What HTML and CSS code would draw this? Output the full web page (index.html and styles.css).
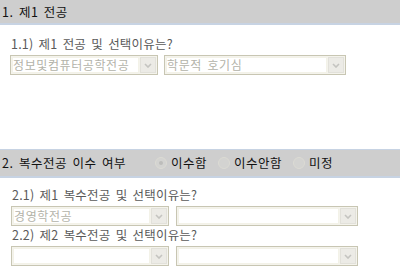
FILE: index.html
```html
<!DOCTYPE html>
<html lang="ko">
<head>
<meta charset="utf-8">
<title>전공 선택</title>
<link rel="stylesheet" href="styles.css">
</head>
<body>
<div class="head head-first">1. 제1 전공</div>
<div class="body body-1">
  <div class="q">1.1) 제1 전공 및 선택이유는?</div>
  <div class="row">
    <div class="sel w148"><span class="val">정보및컴퓨터공학전공</span><span class="btn"><svg width="8" height="5" viewBox="0 0 8 5"><path d="M1 1 L4 4 L7 1" fill="none" stroke="#c4c4c0" stroke-width="1.6"/></svg></span></div>
    <div class="sel w182"><span class="val">학문적 호기심</span><span class="btn"><svg width="8" height="5" viewBox="0 0 8 5"><path d="M1 1 L4 4 L7 1" fill="none" stroke="#c4c4c0" stroke-width="1.6"/></svg></span></div>
  </div>
</div>
<div class="head head-second">
  <span>2. 복수전공 이수 여부</span>
  <span class="opt opt-first"><span class="radio checked"></span>이수함</span>
  <span class="opt"><span class="radio"></span>이수안함</span>
  <span class="opt"><span class="radio"></span>미정</span>
</div>
<div class="body body-2">
  <div class="q">2.1) 제1 복수전공 및 선택이유는?</div>
  <div class="row">
    <div class="sel w158"><span class="val">경영학전공</span><span class="btn"><svg width="8" height="5" viewBox="0 0 8 5"><path d="M1 1 L4 4 L7 1" fill="none" stroke="#c4c4c0" stroke-width="1.6"/></svg></span></div>
    <div class="sel w182"><span class="val"></span><span class="btn"><svg width="8" height="5" viewBox="0 0 8 5"><path d="M1 1 L4 4 L7 1" fill="none" stroke="#c4c4c0" stroke-width="1.6"/></svg></span></div>
  </div>
  <div class="q q-next">2.2) 제2 복수전공 및 선택이유는?</div>
  <div class="row">
    <div class="sel w158"><span class="val"></span><span class="btn"><svg width="8" height="5" viewBox="0 0 8 5"><path d="M1 1 L4 4 L7 1" fill="none" stroke="#c4c4c0" stroke-width="1.6"/></svg></span></div>
    <div class="sel w182"><span class="val"></span><span class="btn"><svg width="8" height="5" viewBox="0 0 8 5"><path d="M1 1 L4 4 L7 1" fill="none" stroke="#c4c4c0" stroke-width="1.6"/></svg></span></div>
  </div>
</div>
</body>
</html>
```
FILE: styles.css
```css
html, body {
  margin: 0;
  padding: 0;
  background: #fff;
}
body {
  font-family: "Noto Sans CJK KR", "Liberation Sans", sans-serif;
  font-size: 12px;
  letter-spacing: 0.5px;
  word-spacing: 1.5px;
  color: #333;
}
.head {
  display: flex;
  align-items: center;
  background: #cecece;
  border-bottom: 2px solid #c7d3e3;
  padding-left: 2px;
  color: #111;
  font-size: 12.5px;
  line-height: 16px;
}
.head-first {
  height: 23px;
}
.head-second {
  height: 26px;
  border-top: 1px solid #c7d3e3;
}
.body {
  padding-left: 10px;
}
.body-1 {
  padding-top: 11px;
  padding-bottom: 74px;
}
.body-2 {
  padding-left: 11px;
  padding-top: 9px;
}
.q {
  height: 16px;
  line-height: 16px;
  color: #5a5a5a;
  font-size: 12.5px;
  letter-spacing: 0.2px;
  padding-left: 1px;
  margin-bottom: 3px;
}
.q-next {
  margin-top: 1px;
}
.row {
  display: flex;
  gap: 6px;
}
.body-2 .row {
  gap: 7px;
}
.sel {
  display: flex;
  box-sizing: border-box;
  height: 20px;
  border: 1px solid #c8c6b3;
  background: #f4f3ec;
  padding: 1px;
  gap: 1px;
}
.w148 { width: 148px; }
.w158 { width: 158px; }
.w182 { width: 182px; }
.val {
  flex: 1;
  background: #fff;
  box-shadow: inset 0 0 0 1px #f3f2e8;
  color: #b3b3a9;
  font-size: 12px;
  letter-spacing: 0.6px;
  line-height: 15px;
  padding-left: 1px;
  white-space: nowrap;
}
.btn {
  width: 16px;
  box-sizing: border-box;
  background: #ecebe6;
  border: 1px solid #e2e1da;
  display: flex;
  align-items: center;
  justify-content: center;
}
.opt {
  display: flex;
  align-items: center;
  gap: 4px;
  margin-left: 11px;
  word-spacing: 0;
}
.opt-first {
  margin-left: 29px;
}
.radio {
  width: 12px;
  height: 12px;
  box-sizing: border-box;
  border-radius: 50%;
  border: 1px solid #dcdbd4;
  background: #d3d3d1;
  display: flex;
  align-items: center;
  justify-content: center;
}
.radio.checked::after {
  content: "";
  width: 4px;
  height: 4px;
  border-radius: 50%;
  background: #bdbdbb;
}
```
